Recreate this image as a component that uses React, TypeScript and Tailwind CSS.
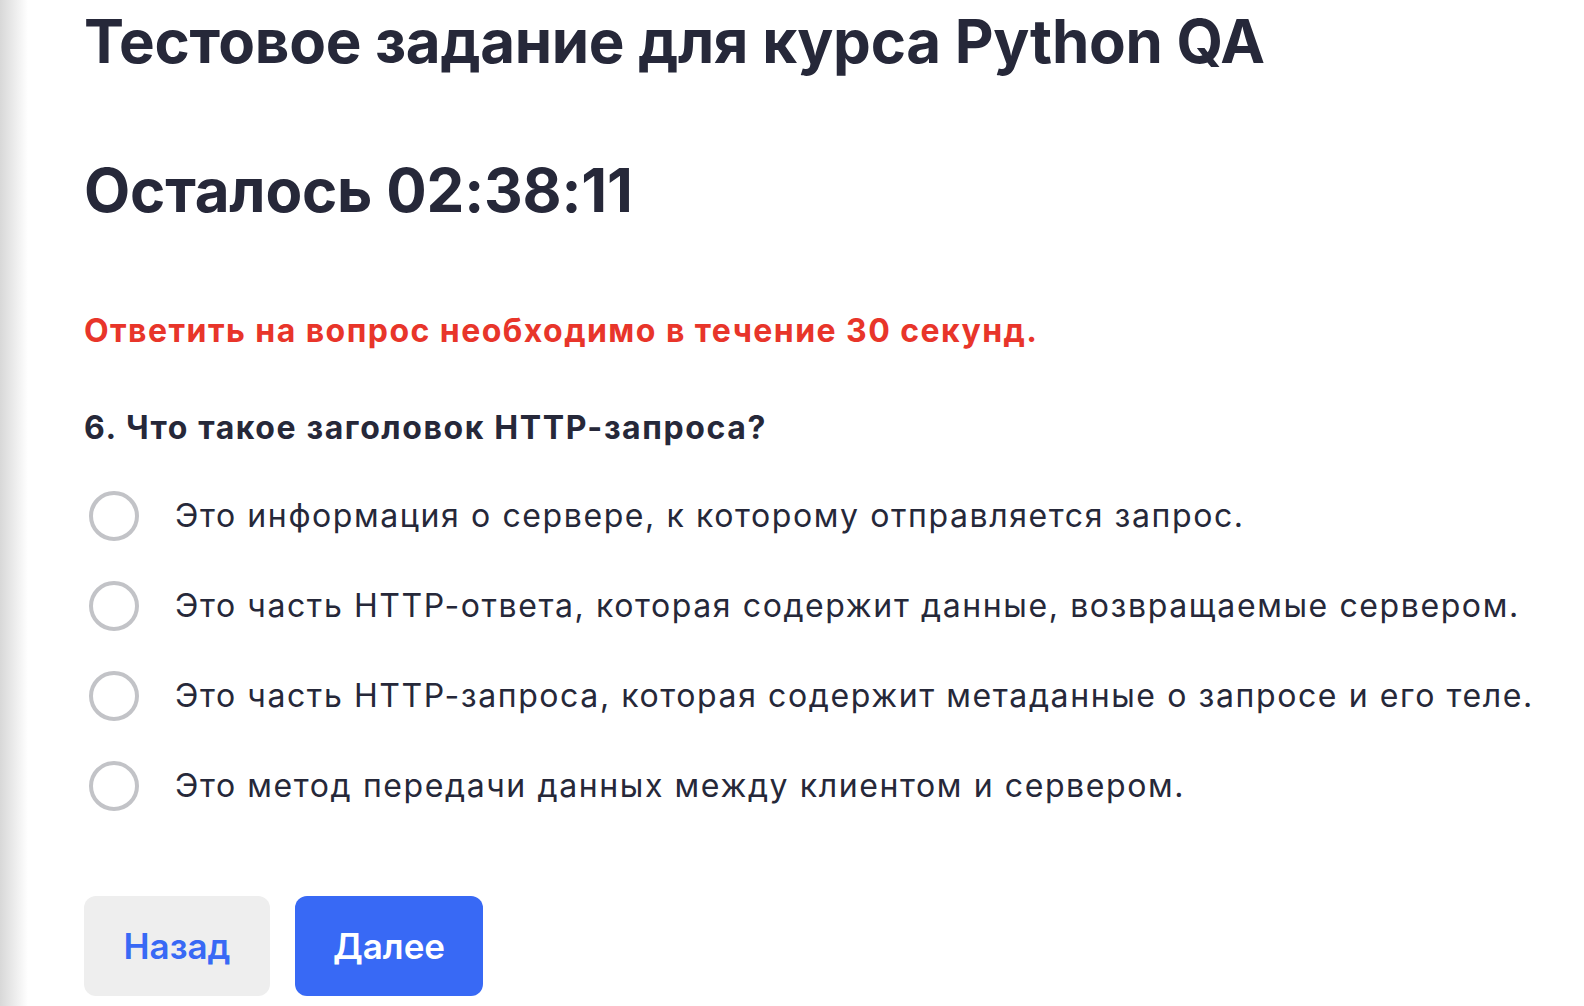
import { useState } from "react";

const options = [
    "Это информация о сервере, к которому отправляется запрос.",
    "Это часть HTTP-ответа, которая содержит данные, возвращаемые сервером.",
    "Это часть HTTP-запроса, которая содержит метаданные о запросе и его теле.",
    "Это метод передачи данных между клиентом и сервером.",
];

const App = () => {
    const [selected, setSelected] = useState<number | null>(null);

    return (
        <div className="flex min-h-screen bg-white text-[#262839] font-['Inter',sans-serif]">
            <div className="w-[28px] shrink-0 bg-gradient-to-r from-[#d8d8d8] to-white" />
            <div className="flex flex-col items-start pl-[56px]">
                <h1 className="mt-[5px] text-[60px] leading-[72px] font-bold tracking-[-0.3px]">
                    Тестовое задание для курса Python QA
                </h1>
                <h2 className="mt-[77px] text-[60px] leading-[72px] font-bold tracking-[-0.2px]">
                    Осталось 02:38:11
                </h2>
                <p className="mt-[85px] text-[32px] leading-[40px] font-bold tracking-[1.45px] text-[#e8352a]">
                    Ответить на вопрос необходимо в течение 30 секунд.
                </p>
                <p className="mt-[57px] text-[32px] leading-[40px] font-bold tracking-[1.6px]">
                    6. Что такое заголовок HTTP-запроса?
                </p>
                <div className="mt-[43px] flex flex-col gap-[40px]">
                    {options.map((text, i) => (
                        <label key={i} className="flex items-center h-[50px] cursor-pointer" onClick={() => setSelected(i)}>
                            <span className="ml-[5px] w-[50px] h-[50px] rounded-full border-[4px] border-[#c2c3c7] flex items-center justify-center">
                                {selected === i && <span className="w-[24px] h-[24px] rounded-full bg-[#3869f5]" />}
                            </span>
                            <span className="ml-[36px] text-[32px] leading-[40px] tracking-[1.6px]">{text}</span>
                        </label>
                    ))}
                </div>
                <div className="mt-[85px] flex gap-[25px]">
                    <button className="w-[186px] h-[100px] rounded-[12px] bg-[#eeeeee] text-[#3869f5] text-[35px] font-semibold">
                        Назад
                    </button>
                    <button className="w-[188px] h-[100px] rounded-[12px] bg-[#3869f5] text-white text-[35px] font-semibold">
                        Далее
                    </button>
                </div>
            </div>
        </div>
    );
};

export default App;
